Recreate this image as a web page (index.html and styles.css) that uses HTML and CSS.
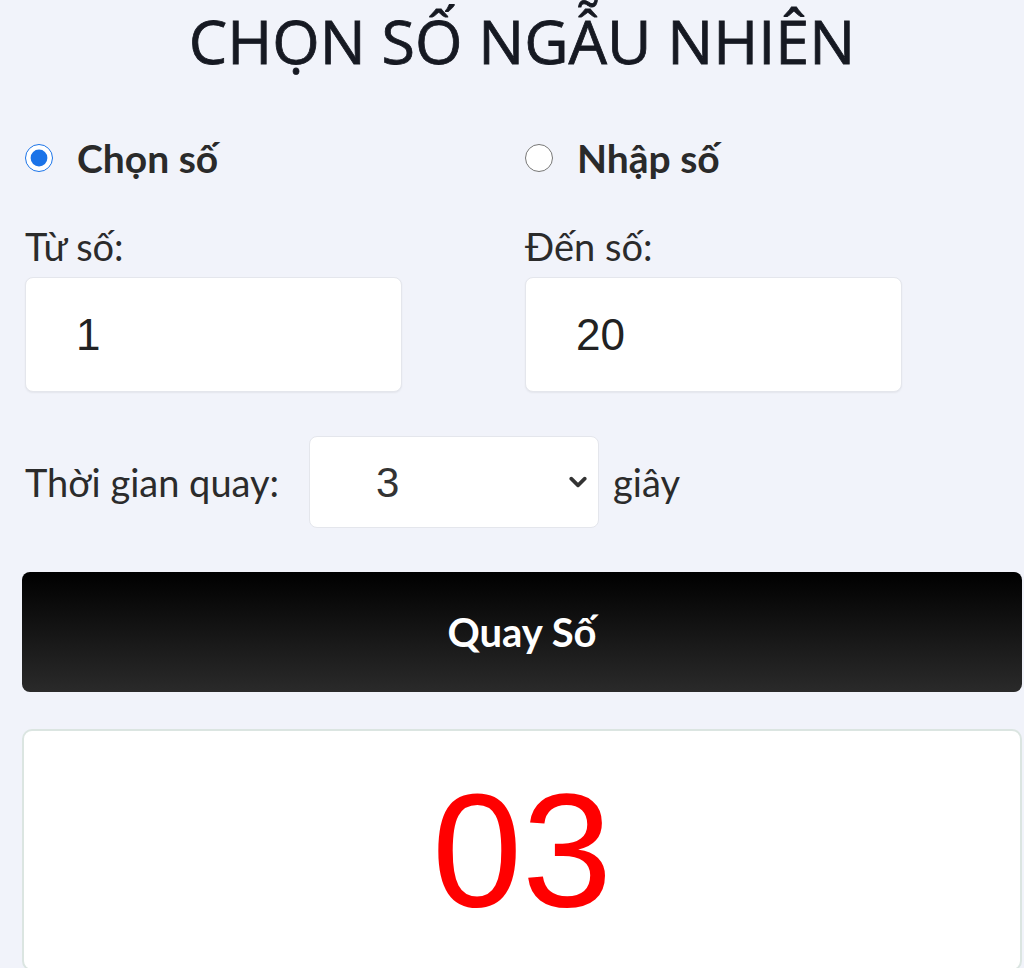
FILE: index.html
```html
<!DOCTYPE html>
<html lang="vi">
<head>
    <meta charset="UTF-8">
    <meta name="viewport" content="width=device-width, initial-scale=1.0">
    <title>Chọn số ngẫu nhiên</title>
    <link rel="stylesheet" href="styles.css">
</head>
<body>
    <div class="container">
        <h1>CHỌN SỐ NGẪU NHIÊN</h1>

        <div class="mode-row">
            <label class="mode">
                <input type="radio" name="mode" value="range" checked>
                <span>Chọn số</span>
            </label>
            <label class="mode">
                <input type="radio" name="mode" value="list">
                <span>Nhập số</span>
            </label>
        </div>

        <div class="range-row">
            <div class="field">
                <label for="from">Từ số:</label>
                <input type="number" id="from" value="1">
            </div>
            <div class="field">
                <label for="to">Đến số:</label>
                <input type="number" id="to" value="20">
            </div>
        </div>

        <div class="time-row">
            <label for="duration">Thời gian quay:</label>
            <div class="select-wrap">
                <select id="duration">
                    <option>1</option>
                    <option>2</option>
                    <option selected>3</option>
                    <option>5</option>
                    <option>10</option>
                </select>
                <svg class="chevron" viewBox="0 0 16 10" width="18" height="12">
                    <path d="M2 2 L8 8 L14 2" fill="none" stroke="#333" stroke-width="3.2" stroke-linecap="round" stroke-linejoin="round"/>
                </svg>
            </div>
            <span>giây</span>
        </div>

        <button id="spin" onclick="spin()">Quay Số</button>

        <div id="result">03</div>
    </div>

    <script>
        function spin() {
            const from = parseInt(document.getElementById('from').value);
            const to = parseInt(document.getElementById('to').value);
            const seconds = parseInt(document.getElementById('duration').value);
            const result = document.getElementById('result');

            if (isNaN(from) || isNaN(to) || to < from) {
                result.textContent = '--';
                return;
            }

            const pick = () => Math.floor(Math.random() * (to - from + 1)) + from;
            const timer = setInterval(() => {
                result.textContent = String(pick()).padStart(2, '0');
            }, 60);

            setTimeout(() => {
                clearInterval(timer);
                result.textContent = String(pick()).padStart(2, '0');
            }, seconds * 1000);
        }
    </script>
</body>
</html>
```

FILE: styles.css
```css
body {
    margin: 0;
    background-color: #f1f3fa;
    font-family: Lato, "Noto Sans", sans-serif;
    color: #2b2b2b;
}
.container {
    width: 1000px;
    margin-left: 22px;
}
h1 {
    margin: 0;
    padding-top: 1px;
    height: 88px;
    font-family: "Open Sans", sans-serif;
    font-weight: 400;
    font-size: 61px;
    line-height: 80px;
    text-align: center;
    color: #161922;
    -webkit-text-stroke: 0.8px #161922;
}
.mode-row {
    display: grid;
    grid-template-columns: 500px 500px;
    height: 50px;
    margin-top: 44px;
}
.mode {
    display: flex;
    align-items: center;
    gap: 24px;
    padding-left: 3px;
    font-weight: bold;
    font-size: 39px;
    color: #2a2a2a;
}
.mode input {
    width: 28px;
    height: 28px;
    margin: 0;
    accent-color: #1a73e8;
}
.range-row {
    display: grid;
    grid-template-columns: 500px 500px;
    margin-top: 41px;
}
.field {
    display: flex;
    flex-direction: column;
    padding-left: 3px;
}
.field label {
    font-size: 38px;
    line-height: 44px;
    margin-bottom: 9px;
}
.field input {
    box-sizing: border-box;
    width: 377px;
    height: 115px;
    padding: 0 0 0 50px;
    border: 1px solid #e4e6ec;
    border-radius: 8px;
    background: #fff;
    box-shadow: 0 1px 2px rgba(0, 0, 0, 0.06);
    font-family: "Liberation Sans", Arial, sans-serif;
    font-size: 44px;
    color: #222;
    outline: none;
    -moz-appearance: textfield;
}
.field input::-webkit-inner-spin-button,
.field input::-webkit-outer-spin-button {
    -webkit-appearance: none;
    margin: 0;
}
.time-row {
    display: flex;
    align-items: center;
    gap: 14px;
    margin-top: 44px;
    padding-left: 3px;
    font-size: 38px;
}
.time-row label {
    margin-right: 16px;
}
.select-wrap {
    position: relative;
}
.select-wrap select {
    box-sizing: border-box;
    width: 290px;
    height: 92px;
    padding-left: 66px;
    border: 1px solid #e4e6ec;
    border-radius: 8px;
    background: #fff;
    font-family: "Liberation Sans", Arial, sans-serif;
    font-size: 42px;
    color: #333;
    appearance: none;
    -webkit-appearance: none;
    outline: none;
}
.chevron {
    position: absolute;
    right: 12px;
    top: 40px;
    pointer-events: none;
}
#spin {
    display: block;
    width: 1000px;
    height: 120px;
    margin-top: 44px;
    border: none;
    border-radius: 8px;
    background: linear-gradient(to bottom, #000000, #2a2a2a);
    color: #fff;
    font-family: Lato, sans-serif;
    font-weight: bold;
    font-size: 40px;
    cursor: pointer;
}
#spin:hover {
    background: linear-gradient(to bottom, #111111, #3a3a3a);
}
#result {
    box-sizing: border-box;
    height: 242px;
    margin-top: 37px;
    border: 2px solid #dbe5e1;
    border-radius: 10px;
    background: #fff;
    font-family: "Liberation Sans", Arial, sans-serif;
    font-size: 162px;
    line-height: 238px;
    text-align: center;
    color: #ff0000;
}
```
